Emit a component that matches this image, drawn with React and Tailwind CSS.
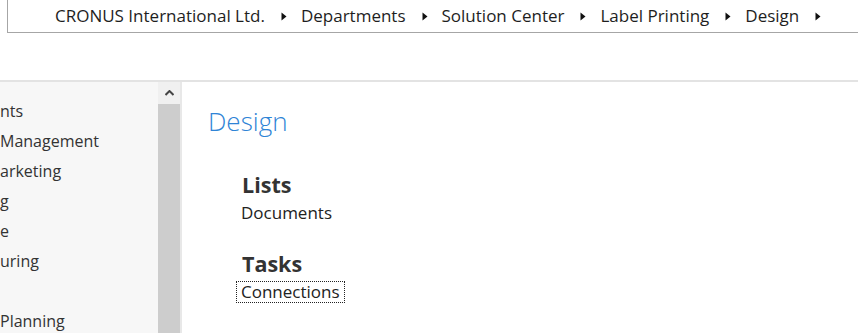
import React from "react";

const Arrow = () => (
  <svg width="6" height="9" viewBox="0 0 6 9" className="ml-[16px] mr-[14px] shrink-0">
    <path d="M0.5 0.5 L5.5 4.5 L0.5 8.5 Z" fill="#111" />
  </svg>
);

export default function App() {
  const crumbs = ["CRONUS International Ltd.", "Departments", "Solution Center", "Label Printing", "Design"];
  const side = ["nts", "Management", "arketing", "g", "e", "uring", "", "Planning"];
  return (
    <div className="w-[858px] h-[333px] bg-white overflow-hidden" style={{ fontFamily: '"Open Sans", "Noto Sans", sans-serif' }}>
      <div className="h-[80px]">
        <div className="ml-[7px] h-[33px] border border-t-0 border-[#a6a6a6] border-r-0 flex items-center pl-[47px] text-[17px] text-[#1e1e1e]">
          {crumbs.map((c) => (
            <React.Fragment key={c}>
              <span>{c}</span>
              <Arrow />
            </React.Fragment>
          ))}
        </div>
      </div>
      <div className="border-t-2 border-[#e3e3e3] flex h-[253px]">
        <div className="w-[158px] bg-[#f7f7f7] pt-[18px] text-[16px] text-[#333]">
          {side.map((s, i) => (
            <div key={i} className="h-[30px] leading-[22px] whitespace-nowrap">{s}</div>
          ))}
        </div>
        <div className="w-[24px] flex flex-col bg-[#e8e8e8]">
          <div className="h-[22px] w-[22px] bg-[#f0f0f0] flex items-center justify-center">
            <svg width="9" height="6" viewBox="0 0 9 6">
              <path d="M0.5 5 L4.5 1 L8.5 5" stroke="#444" strokeWidth="2" fill="none" />
            </svg>
          </div>
          <div className="flex-1 w-[22px] bg-[#cdcdcd]" />
        </div>
        <div className="flex-1 pl-[26px] pt-[21px]">
          <div className="text-[26px] leading-[36px] text-[#2f84d6] font-light">Design</div>
          <div className="pl-[34px] pt-[33px]">
            <div className="text-[21.5px] leading-[26px] font-bold text-[#333]">Lists</div>
            <div className="text-[17px] leading-[24px] text-[#222] -ml-px mt-[3px]">Documents</div>
            <div className="text-[21.5px] leading-[26px] font-bold text-[#333] mt-[26px]">Tasks</div>
            <div className="-ml-[6px] mt-[4px] inline-block border border-dotted border-[#222] px-[4px] text-[17px] leading-[20px] text-[#222]">Connections</div>
          </div>
        </div>
      </div>
    </div>
  );
}
